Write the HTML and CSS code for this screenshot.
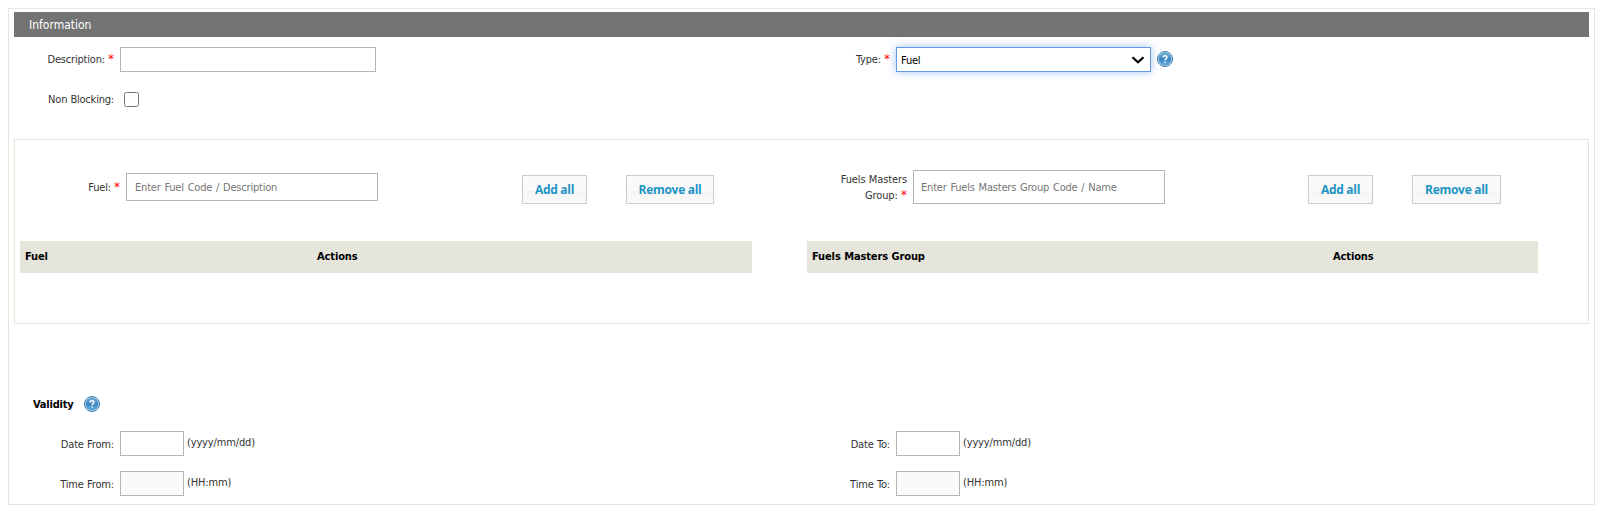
FILE: index.html
```
<!DOCTYPE html>
<html lang="en">
<head>
<meta charset="utf-8">
<title>Information</title>
<link rel="stylesheet" href="styles.css">
</head>
<body>
<svg width="0" height="0" class="defs" aria-hidden="true">
  <defs>
    <linearGradient id="ball" x1="0" y1="0" x2="0" y2="1"><stop offset="0" stop-color="#72b1dd"/><stop offset=".5" stop-color="#3b83c0"/><stop offset="1" stop-color="#5fb2e8"/></linearGradient>
    <symbol id="help" viewBox="0 0 16 16">
      <circle cx="8" cy="8" r="7.5" fill="#b5d8ee" stroke="#286ba0" stroke-width=".9"/>
      <circle cx="8" cy="8" r="5.8" fill="url(#ball)" stroke="#2f78b2" stroke-width=".6"/>
      <path d="M6 6.5C6 4.1 10 4.1 10 6.2C10 7.6 8.1 7.5 8.1 9.2M8.1 10.4V11.8" fill="none" stroke="#fff" stroke-width="1.5"/>
    </symbol>
  </defs>
</svg>
<main class="panel">
  <h1 class="bar"><span>Information</span></h1>
  <section class="general">
    <div class="row">
      <label class="label">Description: <b>*</b></label>
      <input class="field wide" type="text">
    </div>
    <div class="row">
      <label class="label">Type: <b>*</b></label>
      <div class="field wide select"><span>Fuel</span>
        <svg width="14" height="8" viewBox="0 0 14 8"><path d="M1.5 1.2 7 6.2 12.5 1.2" fill="none" stroke="#000" stroke-width="2.2"/></svg>
      </div>
      <svg class="help" width="16" height="16"><use href="#help"/></svg>
    </div>
    <div class="row">
      <label class="label">Non Blocking:</label>
      <input class="check" type="checkbox">
    </div>
  </section>
  <section class="groups">
    <div class="group">
      <div class="tools">
        <label class="label">Fuel: <b>*</b></label>
        <input class="field search" placeholder="Enter Fuel Code / Description">
        <button class="btn add">Add all</button>
        <button class="btn remove">Remove all</button>
      </div>
      <div class="thead"><span>Fuel</span><span>Actions</span></div>
    </div>
    <div class="group second">
      <div class="tools">
        <label class="label">Fuels Masters Group: <b>*</b></label>
        <input class="field search" placeholder="Enter Fuels Masters Group Code / Name">
        <button class="btn add">Add all</button>
        <button class="btn remove">Remove all</button>
      </div>
      <div class="thead"><span>Fuels Masters Group</span><span>Actions</span></div>
    </div>
  </section>
  <section class="validity">
    <h2 class="title"><span>Validity</span><svg width="16" height="16"><use href="#help"/></svg></h2>
    <div class="times">
      <div class="row"><label class="label">Date From:</label><input class="field short"><span class="hint">(yyyy/mm/dd)</span></div>
      <div class="row"><label class="label">Date To:</label><input class="field short"><span class="hint">(yyyy/mm/dd)</span></div>
      <div class="row"><label class="label">Time From:</label><input class="field short" disabled><span class="hint">(HH:mm)</span></div>
      <div class="row"><label class="label">Time To:</label><input class="field short" disabled><span class="hint">(HH:mm)</span></div>
    </div>
  </section>
</main>
</body>
</html>
```
FILE: styles.css
```
* { box-sizing: border-box; }
body { margin: 0; padding: 8px; background: #fff; font: 11px/16px "DejaVu Sans Condensed", "Noto Sans", sans-serif; color: #333; letter-spacing: -0.2px; word-spacing: 0.2px; }
.defs { display: block; position: absolute; }
.panel { width: 1587px; height: 497px; border: 1px solid #e5e5dc; padding: 3px 5px; }
.bar { margin: 0; height: 25px; padding-left: 15px; background: #737373; color: #fff; font-size: 12px; font-weight: 400; line-height: 26px; letter-spacing: 0; }
.general { height: 102px; padding-top: 10px; display: grid; grid-template-columns: 776px 1fr; grid-template-rows: 25px 25px; row-gap: 15px; }
.row { display: flex; align-items: flex-start; }
.label { width: 100px; margin-right: 6px; padding-top: 5px; text-align: right; }
.label b { color: #f00; font: 400 12px/12px "DejaVu Sans", sans-serif; letter-spacing: 0; }
.field { height: 25px; border: 1px solid #b5b5b5; background: #fff; padding: 0 8px; font: inherit; letter-spacing: inherit; word-spacing: inherit; outline: 0; }
.field:disabled { background: #fafafa; }
.wide { width: 256px; }
.select { width: 255px; display: flex; align-items: center; justify-content: space-between; padding: 1px 5px 0 4px; border-color: #6699e3; color: #000; box-shadow: 0 0 8px rgba(102, 153, 235, .6); }
.select span { padding-top: 1px; }
.help { margin: 4px 0 0 6px; }
.check { width: 15px; height: 15px; margin: 5px 0 0 4px; appearance: none; border: 1px solid #767676; border-radius: 2.5px; background: #fff; }
.groups { height: 185px; border: 1px solid #e5e5dc; padding: 27px 5px 0; display: flex; gap: 55px; }
.group { width: 732px; }
.second { width: 731px; }
.tools { display: flex; align-items: center; height: 40px; }
.groups .label { padding: 1px 0 0; }
.groups .second .label { width: 80px; margin-left: 20px; letter-spacing: -0.1px; }
.search { width: 252px; height: 28px; letter-spacing: -0.2px; word-spacing: 0.9px; }
.second .search { height: 34px; padding-left: 7px; }
.btn { height: 29px; margin-top: 5px; padding: 0 0 1px; border: 1px solid #ccc; background: linear-gradient(#fafafa 55%, #f5f5f5 55%, #fafafa); color: #1c94c4; font: 700 12px "Open Sans", sans-serif; letter-spacing: -0.3px; }
.add { width: 65px; margin-left: 144px; }
.second .add { margin-left: 143px; }
.remove { width: 88px; margin-left: 39px; }
.second .remove { width: 89px; }
.thead { height: 32px; margin-top: 34px; padding: 0 5px; background: #e5e5dc; color: #000; font-weight: 700; line-height: 32px; letter-spacing: -0.12px; display: grid; grid-template-columns: 292px 1fr; }
.second .thead { grid-template-columns: 521px 1fr; }
.title { margin: 0; padding: 72px 0 0 19px; display: flex; gap: 10px; font-size: 11px; line-height: 17px; letter-spacing: -0.2px; color: #000; }
.times { margin-top: 18px; display: grid; grid-template-columns: 776px 1fr; row-gap: 15px; }
.times .label { padding-top: 6px; letter-spacing: -0.15px; }
.short { width: 64px; }
.hint { margin: 4px 0 0 3px; letter-spacing: -0.15px; }
```
